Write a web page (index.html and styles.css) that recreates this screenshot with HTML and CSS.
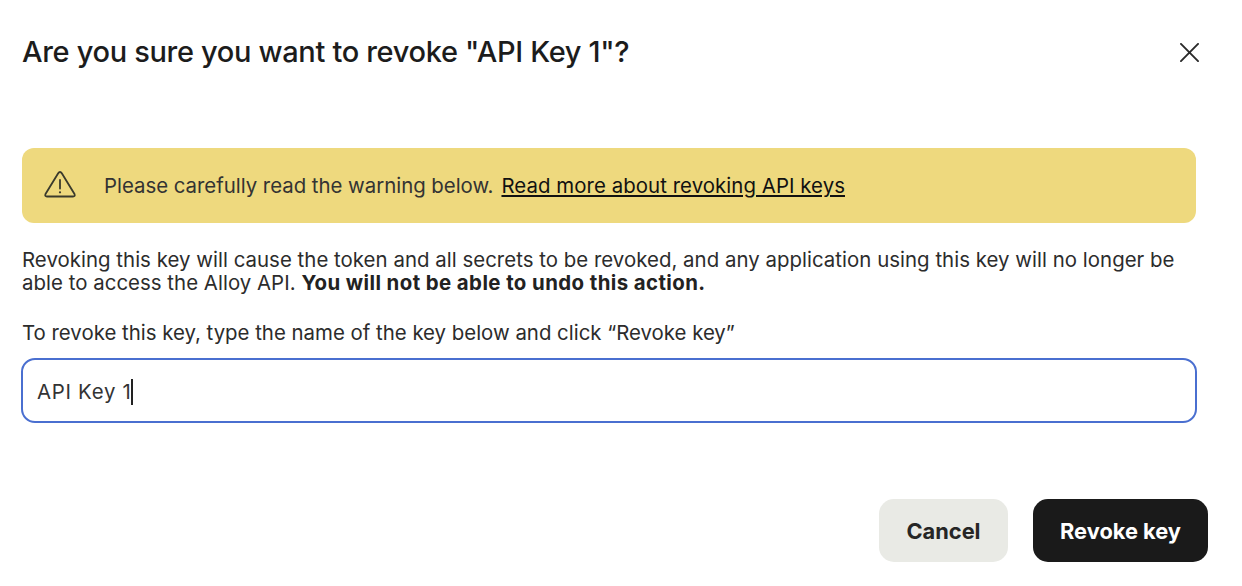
FILE: index.html
```html
<!DOCTYPE html>
<html lang="en">
<head>
<meta charset="utf-8">
<title>Revoke API key</title>
<link rel="stylesheet" href="styles.css">
</head>
<body>
<div class="dialog">
  <header class="head">
    <h1 class="title">Are you sure you want to revoke "API Key 1"?</h1>
    <button class="close" aria-label="Close">
      <svg width="20" height="20" viewBox="0 0 20 20"><path d="M1 1L19 19M19 1L1 19" stroke="#2a2a2a" stroke-width="2" fill="none" stroke-linecap="round"/></svg>
    </button>
  </header>
  <div class="content">
    <div class="alert">
      <svg class="alert-icon" width="34" height="30" viewBox="0 0 34 30"><path d="M17 3Q18 3 18.800 4.300L31.500 25Q32.500 27.500 30 27.500H4Q1.500 27.500 2.500 25L15.200 4.300Q16 3 17 3Z" stroke="#3a3a2c" stroke-width="1.8" fill="none" stroke-linejoin="round"/><path d="M17 11V19.500" stroke="#3a3a2c" stroke-width="1.800" stroke-linecap="round"/><circle cx="17" cy="23.300" r="1.100" fill="#3a3a2c"/></svg>
      <span class="alert-text">Please carefully read the warning below.</span>
      <a class="alert-link" href="#">Read more about revoking API keys</a>
    </div>
    <p class="desc">Revoking this key will cause the token and all secrets to be revoked, and any application using this key will no longer be able to access the Alloy API. <b>You will not be able to undo this action.</b></p>
    <p class="instr">To revoke this key, type the name of the key below and click “Revoke key”</p>
    <div class="input"><span class="value">API Key 1</span><i class="caret"></i></div>
  </div>
  <footer class="foot">
    <button class="btn cancel">Cancel</button>
    <button class="btn revoke">Revoke key</button>
  </footer>
</div>
</body>
</html>
```
FILE: styles.css
```css
* { box-sizing: border-box; }
html, body { margin: 0; padding: 0; background: #fff; }
body { width: 1242px; height: 586px; overflow: hidden; font-family: Inter, "Liberation Sans", sans-serif; color: #262626; }
.dialog { display: flex; flex-direction: column; padding: 33px 34px 0 22px; }
.head { display: flex; justify-content: space-between; align-items: center; height: 38px; }
.title { margin: 0; font-size: 29px; line-height: 38px; font-weight: 500; letter-spacing: -0.33px; color: #1c1c1c; }
.close { width: 22px; height: 22px; margin-right: 8px; padding: 0; border: 0; background: none; display: flex; align-items: center; justify-content: center; }
.close svg { width: 19px; height: 19px; }
.content { width: 1174px; margin-top: 77px; }
.alert { height: 75px; border-radius: 12px; background: #eed97e; display: flex; align-items: center; padding-left: 21px; font-size: 20.4px; color: #333; }
.alert-icon { flex: none; margin-right: 27px; margin-top: -3px; width: 34px; height: 30px; }
.alert-text { letter-spacing: -0.02px; }
.alert-link { margin-left: 8px; color: #111; text-decoration: underline; letter-spacing: 0.06px; }
.desc { margin: 26px 0 0; font-size: 20.4px; line-height: 22.5px; letter-spacing: 0.035px; color: #2c2c2c; }
.desc b { font-weight: 700; color: #222; letter-spacing: 0.42px; }
.instr { margin: 27px 0 0; font-size: 20.4px; line-height: 24px; color: #2c2c2c; }
.input { height: 65px; margin-top: 13px; border: 2px solid #4a6fd0; border-radius: 14px; display: flex; align-items: center; padding-left: 14px; font-size: 20.4px; color: #333; width: 1176px; margin-left: -1px; }
.value { position: relative; top: 1px; letter-spacing: 0.7px; }
.caret { display: block; width: 1.5px; height: 26px; background: #222; position: relative; top: 1px; }
.foot { display: flex; justify-content: flex-end; gap: 25px; margin-top: 76px; }
.btn { height: 63px; border: 0; border-radius: 15px; font-family: inherit; font-size: 21.8px; font-weight: 700; padding: 0; }
.cancel { width: 129px; background: #e9eae5; color: #262626; }
.revoke { width: 175px; background: #1a1a1a; color: #fff; }
```
